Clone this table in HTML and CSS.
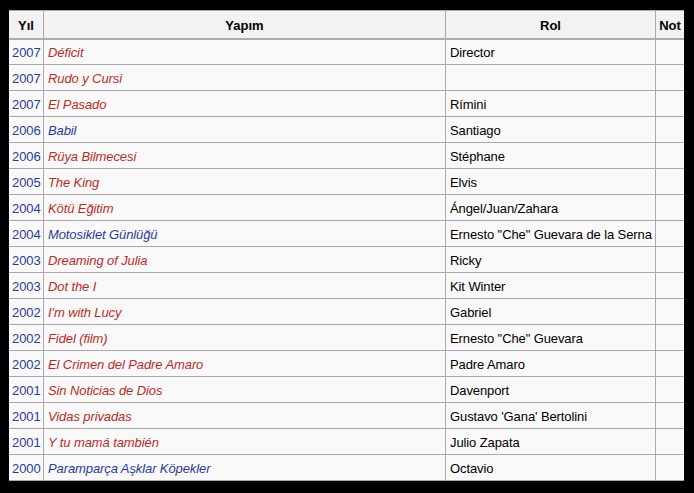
FILE: index.html
```html
<!DOCTYPE html>
<html>
<head>
<meta charset="utf-8">
<link rel="stylesheet" href="styles.css">
</head>
<body>
<div class="frame">
<table class="wikitable">
<colgroup><col class="c-yil"><col class="c-yapim"><col class="c-rol"><col class="c-not"></colgroup>
<thead>
<tr><th>Yıl</th><th>Yapım</th><th>Rol</th><th>Not</th></tr>
</thead>
<tbody>
<tr><td><span class="yr">2007</span></td><td><i class="new">Déficit</i></td><td>Director</td><td></td></tr>
<tr><td><span class="yr">2007</span></td><td><i class="new">Rudo y Cursi</i></td><td></td><td></td></tr>
<tr><td><span class="yr">2007</span></td><td><i class="new">El Pasado</i></td><td>Rímini</td><td></td></tr>
<tr><td><span class="yr">2006</span></td><td><i class="link">Babil</i></td><td>Santiago</td><td></td></tr>
<tr><td><span class="yr">2006</span></td><td><i class="new">Rüya Bilmecesi</i></td><td>Stéphane</td><td></td></tr>
<tr><td><span class="yr">2005</span></td><td><i class="new">The King</i></td><td>Elvis</td><td></td></tr>
<tr><td><span class="yr">2004</span></td><td><i class="new">Kötü Eğitim</i></td><td>Ángel/Juan/Zahara</td><td></td></tr>
<tr><td><span class="yr">2004</span></td><td><i class="link">Motosiklet Günlüğü</i></td><td>Ernesto "Che" Guevara de la Serna</td><td></td></tr>
<tr><td><span class="yr">2003</span></td><td><i class="new">Dreaming of Julia</i></td><td>Ricky</td><td></td></tr>
<tr><td><span class="yr">2003</span></td><td><i class="new">Dot the I</i></td><td>Kit Winter</td><td></td></tr>
<tr><td><span class="yr">2002</span></td><td><i class="new">I'm with Lucy</i></td><td>Gabriel</td><td></td></tr>
<tr><td><span class="yr">2002</span></td><td><i class="new">Fidel (film)</i></td><td>Ernesto "Che" Guevara</td><td></td></tr>
<tr><td><span class="yr">2002</span></td><td><i class="new">El Crimen del Padre Amaro</i></td><td>Padre Amaro</td><td></td></tr>
<tr><td><span class="yr">2001</span></td><td><i class="new">Sin Noticias de Dios</i></td><td>Davenport</td><td></td></tr>
<tr><td><span class="yr">2001</span></td><td><i class="new">Vidas privadas</i></td><td>Gustavo 'Gana' Bertolini</td><td></td></tr>
<tr><td><span class="yr">2001</span></td><td><i class="new">Y tu mamá también</i></td><td>Julio Zapata</td><td></td></tr>
<tr><td><span class="yr">2000</span></td><td><i class="link">Paramparça Aşklar Köpekler</i></td><td>Octavio</td><td></td></tr>
</tbody>
</table>
</div>
</body>
</html>
```
FILE: styles.css
```css
html, body {
  margin: 0;
  padding: 0;
  background: #000;
  height: 493px;
  overflow: hidden;
}
.frame {
  margin: 10px 0 0 9px;
  width: 675px;
  height: 471px;
  overflow: hidden;
  background: #f9f9f9;
}
.wikitable {
  border-collapse: collapse;
  width: 676px;
  margin-left: -1px;
  table-layout: fixed;
  font-family: "Liberation Sans", Arial, sans-serif;
  font-size: 13px;
  color: #000;
  background: #f9f9f9;
}
.c-yil { width: 35px; }
.c-yapim { width: 402px; }
.c-rol { width: 210px; }
.c-not { width: 29px; }
.wikitable th,
.wikitable td {
  box-sizing: border-box;
  border: 1px solid #aaa;
  padding: 2px 2px 0 4px;
  height: 26px;
  line-height: 15px;
  text-align: left;
  white-space: nowrap;
  overflow: hidden;
  letter-spacing: -0.1px;
}
.wikitable th {
  background: #f2f2f2;
  font-weight: bold;
  text-align: center;
  height: 28px;
  padding: 3px 0 0 0;
  border-bottom: 2px solid #aaa;
  letter-spacing: 0;
}
.wikitable td:first-child { padding-left: 3px; }
.yr { color: #2a3aa0; }
.new { color: #bf2a1f; }
.link { color: #2a3aa0; }
```
